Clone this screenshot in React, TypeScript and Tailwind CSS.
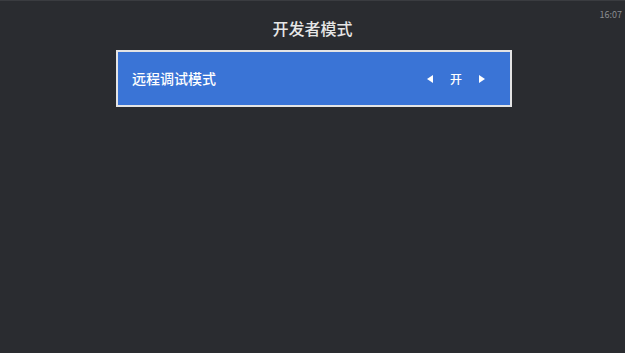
import React from 'react';

export default function App() {
  return (
    <div
      className="relative w-[625px] h-[353px] overflow-hidden bg-[#2a2c30] border-t border-[#3a3c40]"
      style={{ fontFamily: '"Noto Sans CJK SC", "Noto Sans", sans-serif' }}
    >
      {/* status clock */}
      <span className="absolute right-[3px] top-[9px] text-[9px] leading-none text-[#8a8c90]">16:07</span>

      <div className="flex flex-col items-center pt-[16px]">
        <h1 className="text-[16px] leading-[22px] font-medium text-[#e6e6e6]">开发者模式</h1>

        <div className="mt-[11px] ml-[3px] w-[396px] h-[57px] border-2 border-[#e4e4e4] bg-[#3a74d6] flex items-center pl-[14px] pr-[25px]">
          <span className="text-[14px] text-white font-medium">远程调试模式</span>
          <div className="ml-auto flex items-center text-white">
            <svg width="7" height="8" viewBox="0 0 7 8" className="fill-white">
              <path d="M6 0 L0 4 L6 8 Z" />
            </svg>
            <span className="mx-[16px] text-[12px] font-medium">开</span>
            <svg width="7" height="8" viewBox="0 0 7 8" className="fill-white">
              <path d="M1 0 L7 4 L1 8 Z" />
            </svg>
          </div>
        </div>
      </div>
    </div>
  );
}
